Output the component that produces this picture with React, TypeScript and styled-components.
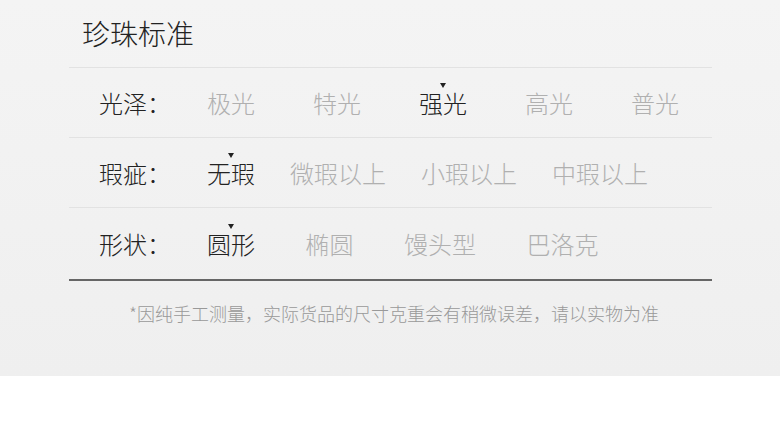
import React from "react";
import styled, { createGlobalStyle } from "styled-components";

const Global = createGlobalStyle`
  html, body { margin: 0; padding: 0; background: #ffffff; }
  body { font-family: "Noto Sans CJK SC", "Noto Sans", sans-serif; }
`;

const Panel = styled.section`
  height: 376px;
  box-sizing: border-box;
  background: linear-gradient(#f4f4f4, #efefef);
  padding: 0 68px 0 69px;
`;

const Header = styled.div`
  height: 68px;
  display: flex;
  align-items: center;
  padding: 0 0 2px 13px;
  box-sizing: border-box;
  border-bottom: 1px solid #e2e2e2;
`;

const Title = styled.h1`
  margin: 0;
  font-size: 28px;
  font-weight: 300;
  line-height: 36px;
  color: #222;
`;

const Row = styled.div<{ $last?: boolean }>`
  display: flex;
  align-items: center;
  height: ${(p) => (p.$last ? 71 : 69)}px;
  padding-left: 30px;
  border-bottom: ${(p) => (p.$last ? "2px solid #666" : "1px solid #e2e2e2")};
`;

const Label = styled.div`
  width: 108px;
  flex: none;
  font-size: 24px;
  font-weight: 300;
  line-height: 24px;
  color: #222;
`;

const Options = styled.div<{ $gap: number }>`
  display: flex;
  align-items: center;
  gap: ${(p) => p.$gap}px;
`;

const Option = styled.span<{ $active?: boolean }>`
  position: relative;
  font-size: 24px;
  font-weight: 300;
  line-height: 24px;
  white-space: nowrap;
  color: ${(p) => (p.$active ? "#222" : "#b0b0b0")};
  &::before {
    content: "";
    display: ${(p) => (p.$active ? "block" : "none")};
    position: absolute;
    top: -8px;
    left: 50%;
    margin-left: -3.5px;
    width: 0;
    height: 0;
    border-left: 3.5px solid transparent;
    border-right: 3.5px solid transparent;
    border-top: 5px solid #222;
  }
`;

const Note = styled.p`
  margin: 0;
  padding: 20px 0 0 7px;
  text-align: center;
  font-size: 18px;
  font-weight: 300;
  line-height: 24px;
  color: #999;
`;

const rows = [
  { label: "光泽：", gap: 58, active: 2, items: ["极光", "特光", "强光", "高光", "普光"] },
  { label: "瑕疵：", gap: 35, active: 0, items: ["无瑕", "微瑕以上", "小瑕以上", "中瑕以上"] },
  { label: "形状：", gap: 50.5, active: 0, items: ["圆形", "椭圆", "馒头型", "巴洛克"] },
];

export default function App() {
  return (
    <>
      <Global />
      <Panel>
        <Header>
          <Title>珍珠标准</Title>
        </Header>
        {rows.map((r, i) => (
          <Row key={r.label} $last={i === rows.length - 1}>
            <Label>{r.label}</Label>
            <Options $gap={r.gap}>
              {r.items.map((it, j) => (
                <Option key={it} $active={j === r.active}>
                  {it}
                </Option>
              ))}
            </Options>
          </Row>
        ))}
        <Note>*因纯手工测量，实际货品的尺寸克重会有稍微误差，请以实物为准</Note>
      </Panel>
    </>
  );
}
